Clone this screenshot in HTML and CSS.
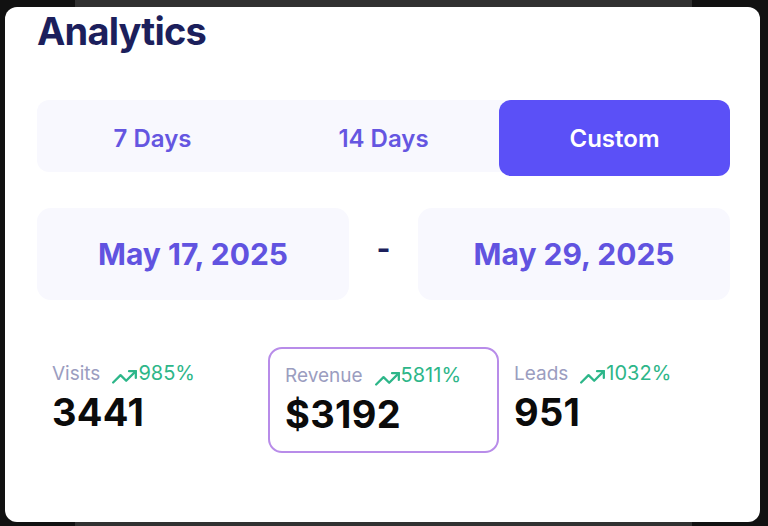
FILE: index.html
```html
<!DOCTYPE html>
<html lang="en">
<head>
<meta charset="utf-8">
<title>Analytics</title>
<link rel="stylesheet" href="styles.css">
</head>
<body>
<main class="card">
  <h1 class="title">Analytics</h1>

  <div class="segments">
    <button class="seg">7 Days</button>
    <button class="seg">14 Days</button>
    <button class="seg seg-active">Custom</button>
  </div>

  <div class="dates">
    <div class="date-box">May 17, 2025</div>
    <div class="dash">-</div>
    <div class="date-box">May 29, 2025</div>
  </div>

  <div class="stats">
    <div class="stat">
      <div class="stat-head">
        <span class="stat-label">Visits</span>
        <span class="trend">
          <svg class="trend-icon" viewBox="1 6 22 12" fill="none" stroke="currentColor" stroke-width="2" stroke-linecap="round" stroke-linejoin="round"><polyline points="22 7 13.5 15.5 8.5 10.5 2 17"/><polyline points="16 7 22 7 22 13"/></svg>985%
        </span>
      </div>
      <div class="stat-value">3441</div>
    </div>
    <div class="stat stat-active">
      <div class="stat-head">
        <span class="stat-label">Revenue</span>
        <span class="trend">
          <svg class="trend-icon" viewBox="1 6 22 12" fill="none" stroke="currentColor" stroke-width="2" stroke-linecap="round" stroke-linejoin="round"><polyline points="22 7 13.5 15.5 8.5 10.5 2 17"/><polyline points="16 7 22 7 22 13"/></svg>5811%
        </span>
      </div>
      <div class="stat-value">$3192</div>
    </div>
    <div class="stat">
      <div class="stat-head">
        <span class="stat-label">Leads</span>
        <span class="trend">
          <svg class="trend-icon" viewBox="1 6 22 12" fill="none" stroke="currentColor" stroke-width="2" stroke-linecap="round" stroke-linejoin="round"><polyline points="22 7 13.5 15.5 8.5 10.5 2 17"/><polyline points="16 7 22 7 22 13"/></svg>1032%
        </span>
      </div>
      <div class="stat-value">951</div>
    </div>
  </div>
</main>
</body>
</html>
```

FILE: styles.css
```css
* { box-sizing: border-box; }

html, body {
  margin: 0;
  height: 526px;
  overflow: hidden;
}

body {
  background: linear-gradient(to right, #111111 75px, #313131 75px, #313131 692px, #111111 692px);
  font-family: Inter, "Noto Sans", "Liberation Sans", sans-serif;
  padding: 7px 8px 4px 5px;
}

.card {
  width: 755px;
  height: 515px;
  background: #ffffff;
  border-radius: 12px;
  padding: 1px 30px 0 32px;
}

.title {
  margin: 0;
  font-size: 38px;
  line-height: 46px;
  font-weight: 700;
  color: #1c1f5c;
  letter-spacing: -0.8px;
}

.segments {
  margin-top: 46px;
  height: 72px;
  display: grid;
  grid-template-columns: repeat(3, 1fr);
  align-items: start;
  background: #f8f8fe;
  border-radius: 12px;
}

.seg {
  height: 76px;
  border: none;
  background: transparent;
  font-family: inherit;
  font-size: 24px;
  font-weight: 600;
  color: #6556e1;
  border-radius: 12px;
  padding: 0;
}

.seg-active {
  background: #5b50f7;
  color: #ffffff;
}

.dates {
  margin-top: 36px;
  display: grid;
  grid-template-columns: 1fr 69px 1fr;
  align-items: center;
}

.date-box {
  height: 92px;
  background: #f8f8fe;
  border-radius: 14px;
  display: flex;
  align-items: center;
  justify-content: center;
  font-size: 30px;
  font-weight: 700;
  color: #6153e0;
}

.dash {
  text-align: center;
  font-size: 30px;
  font-weight: 700;
  color: #1c1f5c;
  margin-bottom: 12px;
}

.stats {
  margin-top: 47px;
  display: grid;
  grid-template-columns: repeat(3, 1fr);
}

.stat {
  height: 106px;
  padding: 14px 15px;
}

.stat-active {
  border: 2px solid #b88ce9;
  border-radius: 14px;
}

.stat-head {
  display: flex;
  align-items: center;
  gap: 12px;
}

.stat-label {
  font-size: 19px;
  color: #9b9dc0;
}

.trend {
  display: flex;
  align-items: center;
  font-size: 20px;
  font-weight: 400;
  color: #2db689;
}

.trend-icon {
  width: 25px;
  height: 13.6px;
  margin-top: 8px;
  margin-right: 1px;
}

.stat-value {
  margin-top: 5px;
  font-size: 38px;
  line-height: 44px;
  font-weight: 700;
  color: #0b0b0b;
  letter-spacing: 0.3px;
}
```
